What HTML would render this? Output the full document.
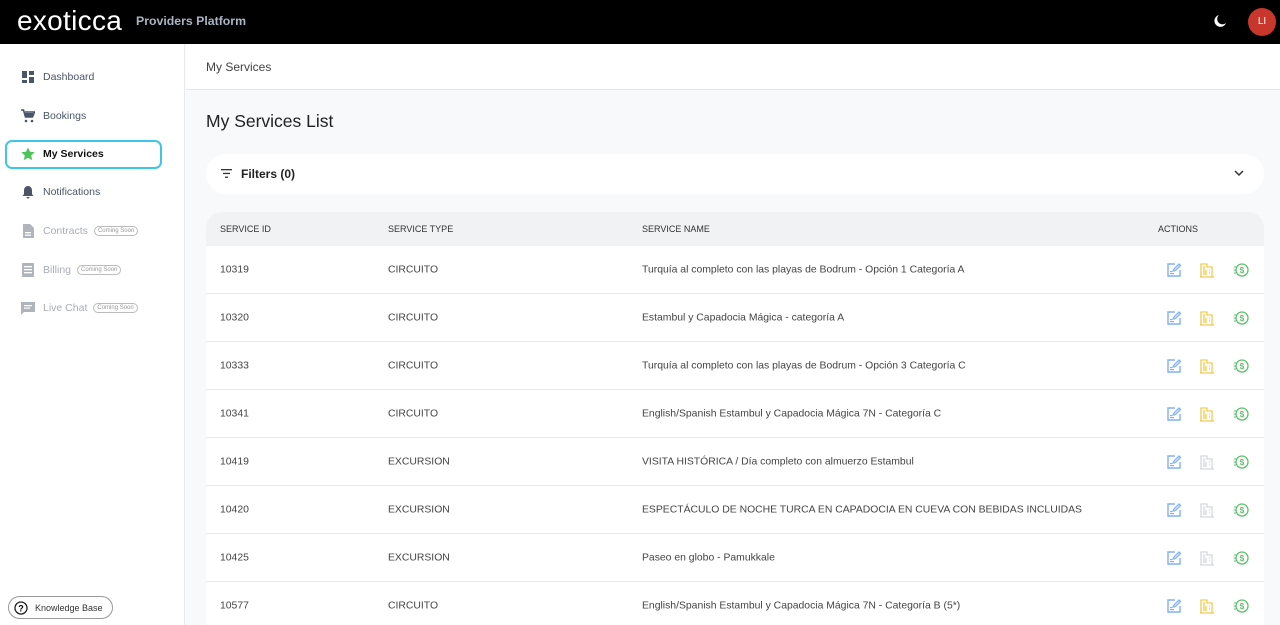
<!DOCTYPE html>
<html><head><meta charset="utf-8"><style>
*{box-sizing:border-box;margin:0;padding:0}
html{width:1280px;height:625px;overflow:hidden}
body{width:1280px;height:625px;overflow:hidden;font-family:"Liberation Sans",sans-serif;background:#f8f9fb;position:relative;color:#333}
.top{position:absolute;left:0;top:0;width:1280px;height:44px;background:#000}
.logo{position:absolute;left:17px;top:5px;color:#fff;font-size:28px;letter-spacing:0.3px;font-weight:400}
.pp{position:absolute;left:136px;top:14px;color:#a9b4c4;font-size:12.3px;font-weight:bold}
.av{position:absolute;left:1248px;top:8px;width:28px;height:28px;border-radius:50%;background:#c9362b;color:#fff;font-size:10px;text-align:center;line-height:28px}
.side{position:absolute;left:0;top:44px;width:185px;height:581px;background:#fff;border-right:1px solid #e8eaee}
.it{position:absolute;left:21px;height:20px;font-size:10.5px;color:#4a5568;display:flex;align-items:center}
.it svg{width:14px;height:14px;margin-right:8px}
.dis{color:#a8adb5}
.cs{font-size:6px;border:1px solid #bbb;border-radius:7px;padding:1px 3px;margin-left:6px;color:#999}
.sel{position:absolute;left:5px;top:140px;width:157px;height:29px;border:2.5px solid #3cc6ea;border-radius:7px}
.kb{position:absolute;left:8px;top:596px;width:105px;height:23px;border:1px solid #999;border-radius:12px;font-size:9px;display:flex;align-items:center;padding-left:5px;color:#333}
.crumb{position:absolute;left:186px;top:44px;width:1094px;height:46px;background:#fff;border-bottom:1px solid #e4e6ea;font-size:12px;color:#444;padding:16px 20px}
h1{position:absolute;left:206px;top:111px;font-size:17.5px;font-weight:normal;color:#222}
.filt{position:absolute;left:206px;top:154px;width:1058px;height:40px;background:#fff;border-radius:20px;font-size:12px;font-weight:bold;padding:13px 35px;color:#222}
.tbl{position:absolute;left:206px;top:212px;width:1058px;height:413px;background:#fff;border-radius:16px 16px 0 0;overflow:hidden}
.hd{height:34px;background:#f1f2f4;font-size:9px;color:#333;position:relative}
.row{height:48px;border-bottom:1px solid #e6e8eb;position:relative;font-size:10.4px;color:#444}
.c{position:absolute;top:50%;transform:translateY(-50%);white-space:nowrap}
.ic{position:absolute;top:50%;transform:translateY(-50%);width:16px;height:16px}
</style></head><body>
<div class="top"><div class="logo">exoticca</div><div class="pp">Providers Platform</div>
<svg style="position:absolute;left:1213px;top:14px" width="14" height="14" viewBox="0 0 14 14"><path d="M6 1A6 6 0 1 0 13 9 5 5 0 0 1 6 1z" fill="#fff"/></svg>
<div class="av">LI</div></div>
<div class="side"></div>
<div class="sel"></div>
<div class="it" style="top:67px"><svg viewBox="0 0 14 14"><rect x="1" y="1" width="5" height="7" fill="#4a5568"/><rect x="8" y="1" width="5" height="4" fill="#4a5568"/><rect x="1" y="10" width="5" height="3" fill="#4a5568"/><rect x="8" y="7" width="5" height="6" fill="#4a5568"/></svg>Dashboard</div>
<div class="it" style="top:106px"><svg viewBox="0 0 14 14"><path d="M0 1h2.5l2 7h7l2-5H4" fill="none" stroke="#4a5568" stroke-width="1.6"/><rect x="4" y="4" width="8" height="4" fill="#4a5568"/><circle cx="5" cy="12" r="1.3" fill="#4a5568"/><circle cx="11" cy="12" r="1.3" fill="#4a5568"/></svg>Bookings</div>
<div class="it" style="top:144px;color:#111;font-weight:bold"><svg viewBox="0 0 14 14"><path d="M7 0.5l2 4.3 4.7.5-3.5 3.2 1 4.6L7 10.7 2.8 13.1l1-4.6L.3 5.3 5 4.8z" fill="#4cc25b"/></svg>My Services</div>
<div class="it" style="top:182px"><svg viewBox="0 0 14 14"><path d="M7 1c-2.5 0-4 2-4 4.5V9L1.5 11h11L11 9V5.5C11 3 9.5 1 7 1z M5.5 12a1.5 1.5 0 0 0 3 0z" fill="#4a5568"/></svg>Notifications</div>
<div class="it dis" style="top:221px"><svg viewBox="0 0 14 14"><path d="M2 0h7l4 4v10H2z" fill="#b0b5bd"/><rect x="4" y="8" width="6" height="1.3" fill="#fff"/><rect x="4" y="10.5" width="6" height="1.3" fill="#fff"/></svg>Contracts<span class="cs">Coming Soon</span></div>
<div class="it dis" style="top:260px"><svg viewBox="0 0 14 14"><rect x="1" y="0" width="12" height="14" fill="#b0b5bd"/><rect x="3" y="3" width="8" height="1.3" fill="#fff"/><rect x="3" y="6" width="8" height="1.3" fill="#fff"/><rect x="3" y="9" width="8" height="1.3" fill="#fff"/></svg>Billing<span class="cs">Coming Soon</span></div>
<div class="it dis" style="top:298px"><svg viewBox="0 0 14 14"><path d="M0 1h14v10H3l-3 3z" fill="#b0b5bd"/><rect x="3" y="4" width="8" height="1.2" fill="#fff"/><rect x="3" y="6.5" width="6" height="1.2" fill="#fff"/></svg>Live Chat<span class="cs">Coming Soon</span></div>
<div class="kb"><svg width="14" height="14" viewBox="0 0 14 14" style="margin-right:7px"><circle cx="7" cy="7" r="6" fill="none" stroke="#222" stroke-width="1.3"/><text x="7" y="10.5" font-size="9" text-anchor="middle" font-family="Liberation Sans" font-weight="bold">?</text></svg>Knowledge Base</div>
<div class="crumb">My Services</div>
<h1>My Services List</h1>
<div class="filt"><svg style="position:absolute;left:15px;top:15px" width="11" height="9" viewBox="0 0 11 9"><rect y="0" width="11" height="1.3" fill="#333"/><rect x="2" y="3.8" width="7" height="1.3" fill="#333"/><rect x="4" y="7.6" width="3" height="1.3" fill="#333"/></svg>Filters (0)<svg style="position:absolute;right:20px;top:16px" width="10" height="7" viewBox="0 0 10 7"><path d="M1 1l4 4 4-4" fill="none" stroke="#333" stroke-width="1.5"/></svg></div>
<div class="tbl">
<div class="hd"><span class="c" style="left:14px">SERVICE ID</span><span class="c" style="left:182px">SERVICE TYPE</span><span class="c" style="left:436px">SERVICE NAME</span><span class="c" style="left:952px">ACTIONS</span></div>
<div id="rows"></div>
</div>
<script>
var d=[["10319","CIRCUITO","Turquía al completo con las playas de Bodrum - Opción 1 Categoría A",1],["10320","CIRCUITO","Estambul y Capadocia Mágica - categoría A",1],["10333","CIRCUITO","Turquía al completo con las playas de Bodrum - Opción 3 Categoría C",1],["10341","CIRCUITO","English/Spanish Estambul y Capadocia Mágica 7N - Categoría C",1],["10419","EXCURSION","VISITA HISTÓRICA / Día completo con almuerzo Estambul",0],["10420","EXCURSION","ESPECTÁCULO DE NOCHE TURCA EN CAPADOCIA EN CUEVA CON BEBIDAS INCLUIDAS",0],["10425","EXCURSION","Paseo en globo - Pamukkale",0],["10577","CIRCUITO","English/Spanish Estambul y Capadocia Mágica 7N - Categoría B (5*)",1]];
var h="";d.forEach(function(r){var bc=r[3]?"#f3c94a":"#d5d7db";
h+='<div class="row"><span class="c" style="left:14px">'+r[0]+'</span><span class="c" style="left:182px">'+r[1]+'</span><span class="c" style="left:436px">'+r[2]+'</span>'+
'<svg class="ic" style="left:960px" viewBox="0 0 16 16"><path d="M9 2H2v12h12V8" fill="none" stroke="#7fb2f0" stroke-width="1.4"/><path d="M7 9l1-2 5-5 1.5 1.5-5 5z" fill="none" stroke="#7fb2f0" stroke-width="1.3"/><rect x="4" y="9" width="2" height="1.2" fill="#7fb2f0"/><rect x="4" y="11" width="4" height="1.2" fill="#7fb2f0"/></svg>'+
'<svg class="ic" style="left:993px" viewBox="0 0 16 16"><path d="M2 15V2h6v3h5v10z M1 15h14 M5 4v9 M10 8h1 M10 11h1 M7 8v5" fill="none" stroke="'+bc+'" stroke-width="1.3"/></svg>'+
'<svg class="ic" style="left:1027px" viewBox="0 0 16 16"><circle cx="9" cy="8" r="6" fill="none" stroke="#5cc26a" stroke-width="1.3"/><path d="M1 5h2M0.5 8h2M1 11h2" stroke="#5cc26a" stroke-width="1.1"/><text x="9" y="11" font-size="8" text-anchor="middle" fill="#5cc26a" font-family="Liberation Sans" font-weight="bold">$</text></svg></div>';});
document.getElementById("rows").innerHTML=h;
</script>
</body></html>
